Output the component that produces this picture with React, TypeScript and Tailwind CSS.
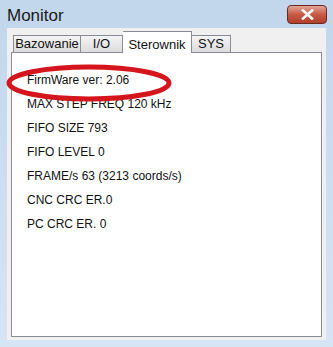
import React from "react";

const lines = [
  "FirmWare ver: 2.06",
  "MAX STEP FREQ 120 kHz",
  "FIFO SIZE 793",
  "FIFO LEVEL 0",
  "FRAME/s 63 (3213 coords/s)",
  "CNC CRC ER.0",
  "PC CRC ER. 0",
];

export default function App() {
  return (
    <div
      className="w-[333px] h-[347px] bg-gradient-to-b from-[#c2d6ec] to-[#d6e5f4] flex flex-col overflow-hidden"
      style={{ fontFamily: "'Liberation Sans', Arial, sans-serif" }}
    >
      {/* title bar */}
      <div className="h-[28px] flex items-start justify-between pl-[7px] pr-[6px]">
        <span className="text-[17px] text-[#1a1a1a] mt-[3px]">Monitor</span>
        <div className="mt-[5px] w-[40px] h-[19px] rounded-[4px] border border-[#6b2a20] bg-gradient-to-b from-[#e3a496] via-[#c75a45] to-[#b0402c] flex items-center justify-center">
          <svg width="13" height="11" viewBox="0 0 13 11">
            <path d="M2 1.5 L11 9.5 M11 1.5 L2 9.5" stroke="#fff" strokeWidth="2.6" strokeLinecap="square" />
          </svg>
        </div>
      </div>

      {/* client area */}
      <div className="flex-1 mx-[7px] mb-[7px] bg-[#f0f0f0] px-[4px] pt-[3px] pb-[3px] flex flex-col">
        <div className="flex items-end h-[21px] pl-[2px]">
          <div className="w-[68px] h-[17px] border border-[#898c95] border-b-0 bg-gradient-to-b from-[#f4f4f4] to-[#dcdcdc] text-[13px] text-[#111] flex items-center justify-center">
            Bazowanie
          </div>
          <div className="w-[42px] h-[17px] border border-[#898c95] border-b-0 border-l-0 bg-gradient-to-b from-[#f4f4f4] to-[#dcdcdc] text-[13px] text-[#111] flex items-center justify-center">
            I/O
          </div>
          <div className="w-[69px] h-[22px] border border-[#898c95] border-b-0 border-l-0 bg-white text-[13px] text-[#111] flex items-start justify-center pt-[3px] -mb-px relative z-10">
            Sterownik
          </div>
          <div className="w-[39px] h-[17px] border border-[#898c95] border-b-0 border-l-0 bg-gradient-to-b from-[#f4f4f4] to-[#dcdcdc] text-[13px] text-[#111] flex items-center justify-center">
            SYS
          </div>
        </div>
        <div className="flex-1 bg-white border border-[#898c95] relative">
          <div className="flex flex-col pl-[15px] pt-[20px] gap-[9px] text-[12px] text-[#111] leading-[15px]">
            {lines.map((l) => (
              <div key={l}>{l}</div>
            ))}
          </div>
          <svg
            className="absolute left-[-6px] top-[11px]"
            width="168"
            height="38"
            viewBox="0 0 168 38"
          >
            <ellipse cx="83" cy="19" rx="80" ry="16" fill="none" stroke="#d4151b" strokeWidth="5" />
          </svg>
        </div>
      </div>
    </div>
  );
}
